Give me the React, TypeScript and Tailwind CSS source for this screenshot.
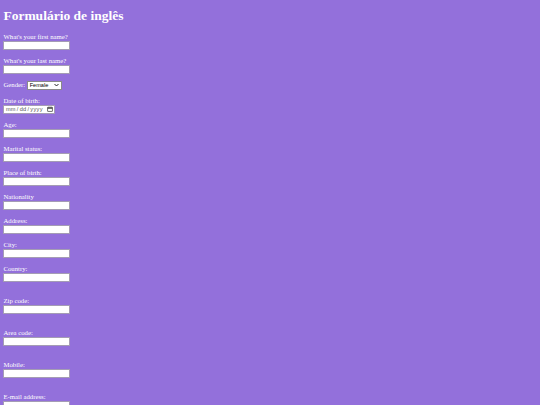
import React from 'react'

const TOP_FIELDS = ['Age:', 'Marital status:', 'Place of birth:', 'Nationality', 'Address:', 'City:', 'Country:']
const LOWER_FIELDS = ['Zip code:', 'Area code:', 'Mobile:', 'E-mail address:']

function Label({ children }: { children: React.ReactNode }) {
  return <div className="h-[8px] text-[6.75px] leading-[8px] text-white whitespace-nowrap">{children}</div>
}

function TextBox() {
  return (
    <input
      type="text"
      className="block w-[67px] h-[9px] bg-white border border-[#a49cb4] outline-none"
    />
  )
}

function Field({ label, loose }: { label: string; loose?: boolean }) {
  return (
    <div className={loose ? 'mb-[15px]' : 'mb-[7px]'}>
      <Label>{label}</Label>
      <TextBox />
    </div>
  )
}

export default function App() {
  return (
    <div
      className="min-h-[405px] bg-[#9370db] px-[3.4px] pt-[8.4px]"
      style={{ fontFamily: '"Liberation Serif", "Times New Roman", serif' }}
    >
      <h1 className="h-[16px] text-[13.5px] leading-[16px] font-bold text-white">Formulário de inglês</h1>

      <form className="mt-[8.3px]">
        <Field label="What's your first name?" />
        <Field label="What's your last name?" />

        {/* Gender */}
        <div className="mb-[7px] flex items-center gap-[2px] h-[9px]">
          <span className="text-[6.75px] leading-[8px] text-white">Gender:</span>
          <div className="flex items-center justify-between w-[35px] h-[9px] bg-white border border-[#8a8a8a] pl-[1.5px] pr-[2px]">
            <span className="text-[5.6px] leading-[6px] text-black" style={{ fontFamily: '"Liberation Sans", Arial, sans-serif' }}>
              Female
            </span>
            <svg width="5" height="4" viewBox="0 0 10 6">
              <path d="M1 1l4 4 4-4" fill="none" stroke="#111" strokeWidth="1.8" />
            </svg>
          </div>
        </div>

        {/* Date of birth */}
        <div className="mb-[7px]">
          <Label>Date of birth:</Label>
          <div className="flex items-center justify-between w-[52px] h-[9px] bg-white border border-[#a49cb4] pl-[1.5px] pr-[1.5px]">
            <span
              className="flex gap-[1px] text-[5.6px] leading-[6px] text-[#555] tracking-[0.3px]"
              style={{ fontFamily: '"Liberation Sans", Arial, sans-serif' }}
            >
              <span>mm</span>/<span>dd</span>/<span>yyyy</span>
            </span>
            <svg width="6" height="6" viewBox="0 0 12 12">
              <rect x="1.5" y="2.5" width="9" height="8" fill="none" stroke="#111" strokeWidth="1.2" />
              <path d="M1.5 5h9M4 1v2.5M8 1v2.5" stroke="#111" strokeWidth="1.2" />
            </svg>
          </div>
        </div>

        {TOP_FIELDS.map((f, i) => (
          <Field key={f} label={f} loose={i === TOP_FIELDS.length - 1} />
        ))}
        {LOWER_FIELDS.map((f) => (
          <Field key={f} label={f} loose />
        ))}
      </form>
    </div>
  )
}
